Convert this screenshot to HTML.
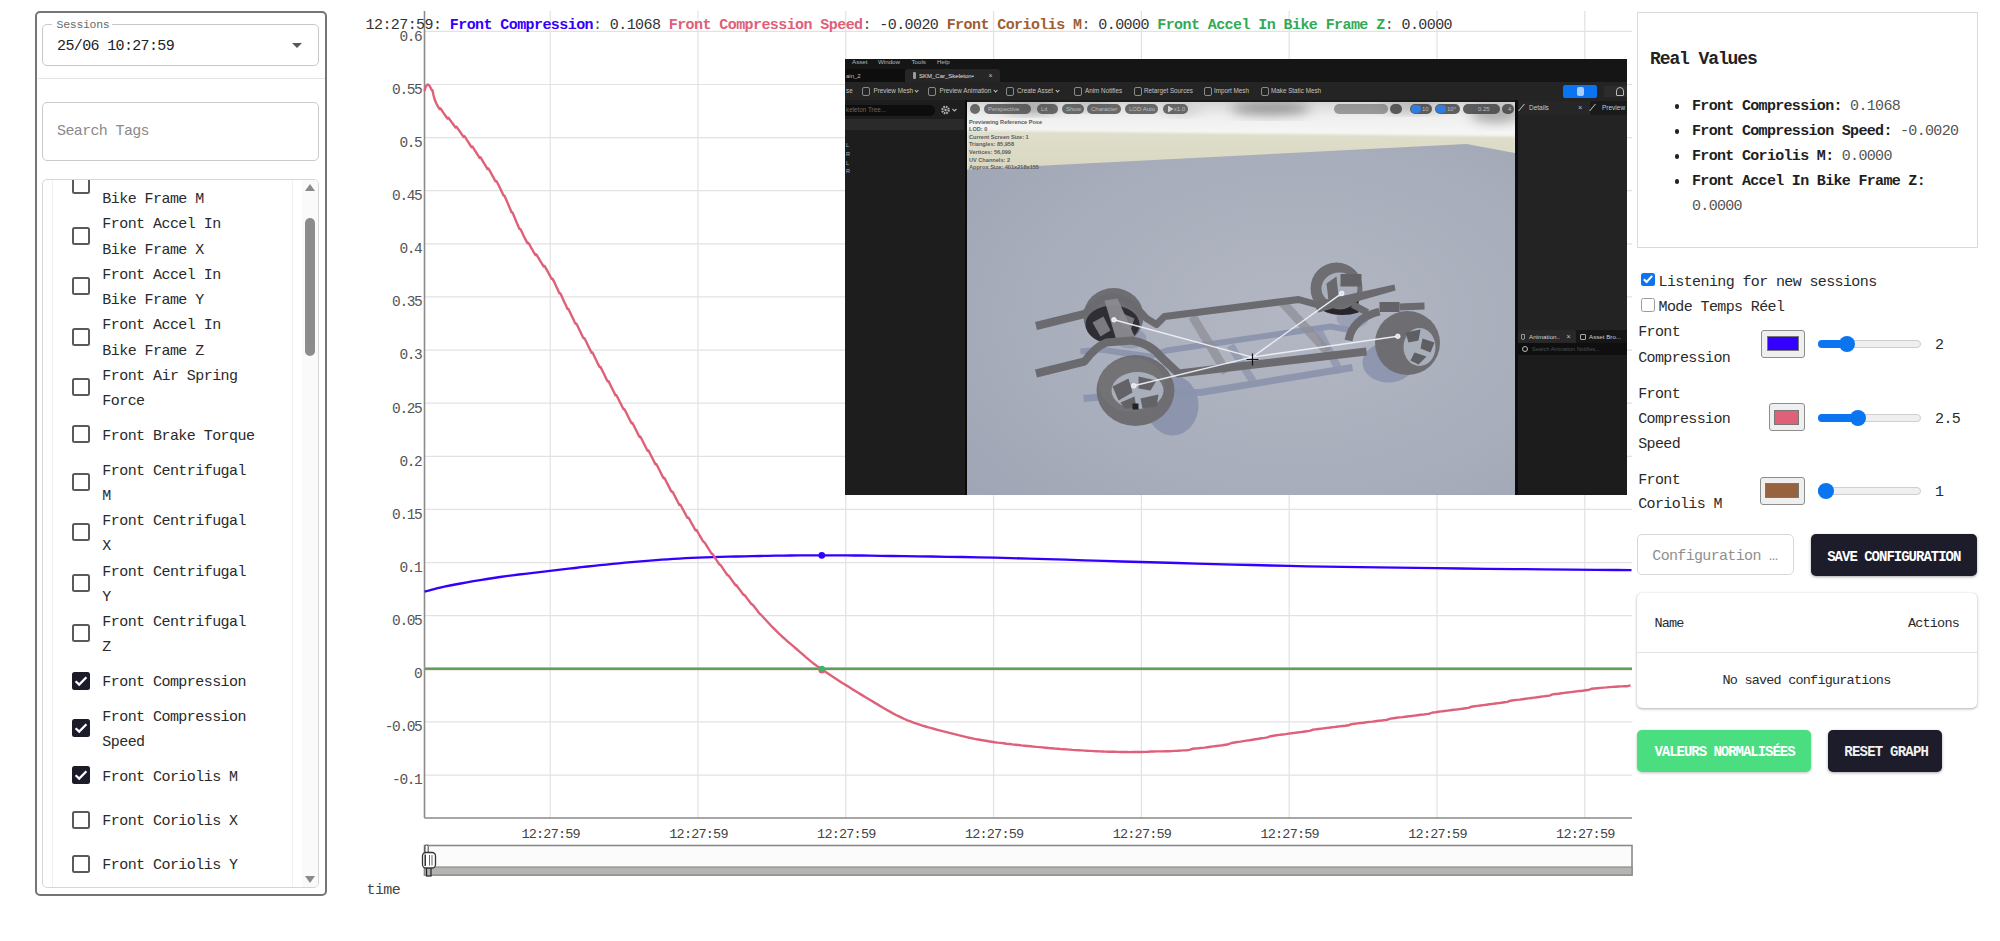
<!DOCTYPE html>
<html><head><meta charset="utf-8"><title>Telemetry</title>
<style>
html,body{margin:0;padding:0;}
body{width:2000px;height:941px;position:relative;overflow:hidden;background:#fff;font-family:"Liberation Mono",monospace;}
.a{position:absolute;box-sizing:border-box;}
.t{position:absolute;white-space:pre;font-family:"Liberation Mono",monospace;}
.ue{font-family:"Liberation Sans",sans-serif;}
</style></head><body>

<svg class="a" style="left:0;top:0" width="2000" height="941" viewBox="0 0 2000 941">
<line x1="424.5" y1="31.36" x2="1632.0" y2="31.36" stroke="#e2e2e2" stroke-width="1.2"/>
<line x1="424.5" y1="84.48" x2="1632.0" y2="84.48" stroke="#e2e2e2" stroke-width="1.2"/>
<line x1="424.5" y1="137.60" x2="1632.0" y2="137.60" stroke="#e2e2e2" stroke-width="1.2"/>
<line x1="424.5" y1="190.72" x2="1632.0" y2="190.72" stroke="#e2e2e2" stroke-width="1.2"/>
<line x1="424.5" y1="243.84" x2="1632.0" y2="243.84" stroke="#e2e2e2" stroke-width="1.2"/>
<line x1="424.5" y1="296.96" x2="1632.0" y2="296.96" stroke="#e2e2e2" stroke-width="1.2"/>
<line x1="424.5" y1="350.08" x2="1632.0" y2="350.08" stroke="#e2e2e2" stroke-width="1.2"/>
<line x1="424.5" y1="403.20" x2="1632.0" y2="403.20" stroke="#e2e2e2" stroke-width="1.2"/>
<line x1="424.5" y1="456.32" x2="1632.0" y2="456.32" stroke="#e2e2e2" stroke-width="1.2"/>
<line x1="424.5" y1="509.44" x2="1632.0" y2="509.44" stroke="#e2e2e2" stroke-width="1.2"/>
<line x1="424.5" y1="562.56" x2="1632.0" y2="562.56" stroke="#e2e2e2" stroke-width="1.2"/>
<line x1="424.5" y1="615.68" x2="1632.0" y2="615.68" stroke="#e2e2e2" stroke-width="1.2"/>
<line x1="424.5" y1="668.80" x2="1632.0" y2="668.80" stroke="#e2e2e2" stroke-width="1.2"/>
<line x1="424.5" y1="721.92" x2="1632.0" y2="721.92" stroke="#e2e2e2" stroke-width="1.2"/>
<line x1="424.5" y1="775.04" x2="1632.0" y2="775.04" stroke="#e2e2e2" stroke-width="1.2"/>
<line x1="550.20" y1="11.0" x2="550.20" y2="818.0" stroke="#e2e2e2" stroke-width="1.2"/>
<line x1="698.00" y1="11.0" x2="698.00" y2="818.0" stroke="#e2e2e2" stroke-width="1.2"/>
<line x1="845.80" y1="11.0" x2="845.80" y2="818.0" stroke="#e2e2e2" stroke-width="1.2"/>
<line x1="993.60" y1="11.0" x2="993.60" y2="818.0" stroke="#e2e2e2" stroke-width="1.2"/>
<line x1="1141.40" y1="11.0" x2="1141.40" y2="818.0" stroke="#e2e2e2" stroke-width="1.2"/>
<line x1="1289.20" y1="11.0" x2="1289.20" y2="818.0" stroke="#e2e2e2" stroke-width="1.2"/>
<line x1="1437.00" y1="11.0" x2="1437.00" y2="818.0" stroke="#e2e2e2" stroke-width="1.2"/>
<line x1="1584.80" y1="11.0" x2="1584.80" y2="818.0" stroke="#e2e2e2" stroke-width="1.2"/>
<line x1="424.5" y1="11.0" x2="424.5" y2="818.0" stroke="#8a8a8a" stroke-width="1.6"/>
<line x1="424.5" y1="818.0" x2="1632.0" y2="818.0" stroke="#8a8a8a" stroke-width="1.6"/>
<line x1="424.5" y1="668.80" x2="1632.0" y2="668.80" stroke="#cfae92" stroke-width="3.0"/>
<line x1="424.5" y1="668.80" x2="1632.0" y2="668.80" stroke="#5f9c5e" stroke-width="2.3"/>
<path d="M424.6,591.6 L426.4,591.1 L428.6,590.6 L431.2,589.9 L434.2,589.1 L437.6,588.2 L441.3,587.3 L445.5,586.4 L450.0,585.5 L455.1,584.5 L460.8,583.5 L466.9,582.4 L473.5,581.2 L480.2,580.1 L486.9,579.0 L493.6,578.0 L500.0,577.0 L506.2,576.1 L512.5,575.3 L518.8,574.5 L525.0,573.8 L531.2,573.1 L537.5,572.3 L543.8,571.6 L550.0,570.9 L556.2,570.2 L562.5,569.4 L568.8,568.7 L575.0,568.0 L581.2,567.2 L587.5,566.5 L593.8,565.9 L600.0,565.2 L606.3,564.6 L612.5,563.9 L618.8,563.3 L625.1,562.7 L631.4,562.2 L637.6,561.6 L643.8,561.1 L650.0,560.6 L656.0,560.1 L661.9,559.7 L667.6,559.3 L673.4,558.9 L679.3,558.6 L685.3,558.2 L691.6,557.9 L698.3,557.6 L705.4,557.3 L712.8,557.1 L720.5,556.9 L728.3,556.7 L736.3,556.5 L744.3,556.3 L752.2,556.1 L760.0,556.0 L767.7,555.9 L775.4,555.7 L783.1,555.6 L790.8,555.5 L798.5,555.4 L806.2,555.4 L813.8,555.3 L821.3,555.3 L828.4,555.3 L834.8,555.3 L841.0,555.3 L847.3,555.4 L854.0,555.5 L861.5,555.5 L870.0,555.7 L880.0,555.8 L891.4,556.0 L904.0,556.1 L917.5,556.3 L931.8,556.5 L946.9,556.8 L962.4,557.0 L978.4,557.3 L994.6,557.7 L1011.3,558.1 L1028.9,558.6 L1047.0,559.2 L1065.6,559.7 L1084.4,560.3 L1103.4,560.9 L1122.2,561.5 L1140.8,562.0 L1159.2,562.5 L1177.7,563.0 L1196.2,563.6 L1214.8,564.1 L1233.4,564.6 L1251.9,565.0 L1270.5,565.5 L1289.0,565.9 L1307.2,566.3 L1324.9,566.6 L1342.5,566.9 L1360.1,567.2 L1378.1,567.4 L1396.7,567.7 L1416.3,567.9 L1437.0,568.2 L1460.4,568.5 L1486.9,568.8 L1515.1,569.1 L1543.5,569.3 L1570.8,569.6 L1595.5,569.8 L1616.2,570.0 L1631.5,570.2" fill="none" stroke="#3300ff" stroke-width="2.3" stroke-linejoin="round"/>
<path d="M424.5,90.8 L425.5,87.5 L426.5,85.5 L427.5,84.5 L428.5,84.8 L429.5,85.9 L430.5,87.6 L431.5,89.8 L432.5,90.4 L433.5,95.3 L434.5,99.0 L435.5,101.6 L436.5,103.7 L437.5,105.6 L438.5,107.4 L439.5,109.0 L440.5,108.4 L441.5,110.0 L442.5,111.4 L443.5,112.9 L444.5,114.3 L445.5,115.8 L446.5,117.2 L447.5,118.6 L448.5,117.8 L449.5,119.2 L450.5,120.6 L451.5,122.0 L452.5,123.3 L453.5,124.7 L454.5,126.1 L455.5,127.5 L456.5,126.7 L457.5,128.2 L458.5,129.6 L459.5,131.0 L460.5,132.4 L461.5,133.9 L462.5,135.4 L463.5,136.9 L464.5,136.2 L465.5,137.7 L466.5,139.3 L467.5,140.8 L468.5,142.4 L469.5,144.0 L470.5,145.6 L471.5,147.2 L472.5,146.5 L473.5,148.2 L474.5,149.8 L475.5,151.4 L476.5,153.0 L477.5,154.6 L478.5,156.2 L479.5,157.9 L480.5,157.3 L481.5,159.0 L482.5,160.6 L483.5,162.3 L484.5,164.0 L485.5,165.7 L486.5,167.4 L487.5,169.1 L488.5,168.6 L489.5,170.4 L490.5,172.2 L491.5,174.0 L492.5,175.8 L493.5,177.6 L494.5,179.5 L495.5,181.4 L496.5,181.1 L497.5,183.0 L498.5,185.0 L499.5,187.0 L500.5,189.1 L501.5,191.2 L502.5,193.3 L503.5,195.6 L504.5,195.7 L505.5,198.0 L506.5,200.2 L507.5,202.6 L508.5,205.0 L509.5,207.4 L510.5,209.8 L511.5,212.2 L512.5,212.4 L513.5,214.9 L514.5,217.3 L515.5,219.7 L516.5,222.1 L517.5,224.4 L518.5,226.7 L519.5,229.1 L520.5,229.1 L521.5,231.2 L522.5,233.3 L523.5,235.5 L524.5,237.5 L525.5,239.4 L526.5,241.4 L527.5,243.3 L528.5,243.0 L529.5,244.7 L530.5,246.5 L531.5,248.3 L532.5,250.0 L533.5,251.8 L534.5,253.4 L535.5,255.1 L536.5,254.6 L537.5,256.3 L538.5,258.0 L539.5,259.6 L540.5,261.3 L541.5,263.0 L542.5,264.7 L543.5,266.4 L544.5,265.9 L545.5,267.6 L546.5,269.4 L547.5,271.2 L548.5,273.0 L549.5,274.9 L550.5,276.8 L551.5,278.8 L552.5,278.6 L553.5,280.6 L554.5,282.6 L555.5,284.8 L556.5,286.9 L557.5,289.0 L558.5,291.2 L559.5,293.4 L560.5,293.4 L561.5,295.7 L562.5,297.9 L563.5,300.2 L564.5,302.4 L565.5,304.6 L566.5,306.8 L567.5,309.0 L568.5,309.0 L569.5,311.2 L570.5,313.3 L571.5,315.4 L572.5,317.5 L573.5,319.6 L574.5,321.8 L575.5,323.8 L576.5,323.7 L577.5,325.8 L578.5,327.9 L579.5,330.0 L580.5,332.1 L581.5,334.2 L582.5,336.2 L583.5,338.3 L584.5,338.2 L585.5,340.3 L586.5,342.3 L587.5,344.4 L588.5,346.5 L589.5,348.5 L590.5,350.6 L591.5,352.7 L592.5,352.5 L593.5,354.6 L594.5,356.7 L595.5,358.7 L596.5,360.8 L597.5,362.9 L598.5,364.9 L599.5,367.0 L600.5,366.9 L601.5,368.9 L602.5,371.0 L603.5,373.0 L604.5,375.1 L605.5,377.1 L606.5,379.2 L607.5,381.2 L608.5,381.1 L609.5,383.1 L610.5,385.2 L611.5,387.2 L612.5,389.3 L613.5,391.3 L614.5,393.3 L615.5,395.4 L616.5,395.2 L617.5,397.2 L618.5,399.3 L619.5,401.3 L620.5,403.3 L621.5,405.3 L622.5,407.3 L623.5,409.3 L624.5,409.2 L625.5,411.2 L626.5,413.2 L627.5,415.2 L628.5,417.2 L629.5,419.2 L630.5,421.2 L631.5,423.2 L632.5,423.0 L633.5,425.0 L634.5,427.0 L635.5,429.0 L636.5,431.0 L637.5,433.0 L638.5,435.0 L639.5,437.0 L640.5,436.8 L641.5,438.8 L642.5,440.8 L643.5,442.8 L644.5,444.8 L645.5,446.7 L646.5,448.7 L647.5,450.7 L648.5,450.5 L649.5,452.5 L650.5,454.5 L651.5,456.5 L652.5,458.5 L653.5,460.5 L654.5,462.4 L655.5,464.4 L656.5,464.2 L657.5,466.2 L658.5,468.2 L659.5,470.2 L660.5,472.2 L661.5,474.2 L662.5,476.2 L663.5,478.2 L664.5,478.0 L665.5,480.0 L666.5,482.0 L667.5,483.9 L668.5,485.9 L669.5,487.9 L670.5,489.9 L671.5,491.8 L672.5,491.6 L673.5,493.5 L674.5,495.5 L675.5,497.4 L676.5,499.4 L677.5,501.3 L678.5,503.2 L679.5,505.1 L680.5,504.8 L681.5,506.7 L682.5,508.6 L683.5,510.5 L684.5,512.4 L685.5,514.2 L686.5,516.1 L687.5,517.9 L688.5,517.6 L689.5,519.4 L690.5,521.2 L691.5,523.1 L692.5,524.9 L693.5,526.7 L694.5,528.5 L695.5,530.3 L696.5,529.9 L697.5,531.7 L698.5,533.5 L699.5,535.2 L700.5,537.0 L701.5,538.6 L702.5,540.3 L703.5,541.9 L704.5,542.3 L705.5,543.9 L706.5,545.5 L707.5,547.1 L708.5,548.7 L709.5,550.3 L710.5,551.9 L711.5,553.5 L712.5,553.8 L713.5,555.4 L714.5,557.0 L715.5,558.5 L716.5,560.1 L717.5,561.6 L718.5,563.1 L719.5,564.6 L720.5,564.9 L721.5,566.4 L722.5,567.9 L723.5,569.4 L724.5,570.9 L725.5,572.3 L726.5,573.8 L727.5,575.2 L728.5,575.4 L729.5,576.8 L730.5,578.2 L731.5,579.6 L732.5,581.0 L733.5,582.4 L734.5,583.8 L735.5,585.2 L736.5,585.3 L737.5,586.7 L738.5,588.0 L739.5,589.4 L740.5,590.8 L741.5,592.1 L742.5,593.5 L743.5,594.8 L744.5,595.0 L745.5,596.3 L746.5,597.6 L747.5,599.0 L748.5,600.3 L749.5,601.6 L750.5,602.9 L751.5,604.3 L752.5,604.4 L753.5,605.7 L754.5,607.0 L755.5,608.3 L756.5,609.6 L757.5,610.9 L758.5,612.2 L759.5,613.5 L760.5,614.2 L763.5,617.5 L766.5,620.8 L769.5,624.0 L772.5,627.2 L775.5,630.2 L778.5,633.1 L781.5,636.0 L784.5,638.7 L787.5,641.3 L790.5,643.9 L793.5,646.4 L796.5,649.0 L799.5,651.6 L802.5,654.2 L805.5,656.9 L808.5,659.4 L811.5,661.9 L814.5,664.2 L817.5,666.4 L820.5,668.5 L823.5,670.6 L826.5,672.6 L829.5,674.6 L832.5,676.6 L835.5,678.5 L838.5,680.4 L841.5,682.4 L844.5,684.3 L847.5,686.1 L850.5,688.0 L853.5,689.9 L856.5,691.7 L859.5,693.6 L862.5,695.4 L865.5,697.2 L868.5,699.0 L871.5,700.8 L874.5,702.6 L877.5,704.4 L880.5,706.2 L883.5,708.0 L886.5,709.7 L889.5,711.4 L892.5,713.1 L895.5,714.7 L898.5,716.2 L901.5,717.6 L904.5,719.0 L907.5,720.3 L910.5,721.4 L913.5,722.6 L916.5,723.6 L919.5,724.6 L922.5,725.6 L925.5,726.5 L928.5,727.4 L931.5,728.2 L934.5,729.0 L937.5,729.8 L940.5,730.6 L943.5,731.4 L946.5,732.1 L949.5,732.9 L952.5,733.6 L955.5,734.4 L958.5,735.2 L961.5,735.9 L964.5,736.6 L967.5,737.3 L970.5,738.0 L973.5,738.6 L976.5,739.3 L979.5,739.8 L982.5,740.3 L985.5,740.8 L988.5,741.3 L991.5,741.7 L994.5,742.2 L997.5,742.6 L1000.5,742.9 L1003.5,743.3 L1006.5,743.7 L1009.5,744.0 L1012.5,744.4 L1015.5,744.7 L1018.5,745.0 L1021.5,745.4 L1024.5,745.7 L1027.5,746.0 L1030.5,746.3 L1033.5,746.6 L1036.5,746.9 L1039.5,747.1 L1042.5,747.4 L1045.5,747.7 L1048.5,748.0 L1051.5,748.2 L1054.5,748.5 L1057.5,748.7 L1060.5,749.0 L1063.5,749.2 L1066.5,749.4 L1069.5,749.6 L1072.5,749.9 L1075.5,750.1 L1078.5,750.2 L1081.5,750.4 L1084.5,750.6 L1087.5,750.8 L1090.5,750.9 L1093.5,751.1 L1096.5,751.2 L1099.5,751.4 L1102.5,751.5 L1105.5,751.6 L1108.5,751.7 L1111.5,751.8 L1114.5,751.8 L1117.5,751.9 L1120.5,752.0 L1123.5,752.0 L1126.5,752.0 L1129.5,752.1 L1132.5,752.0 L1135.5,752.0 L1138.5,752.0 L1141.5,752.0 L1144.5,751.9 L1147.5,751.9 L1150.5,751.5 L1153.5,751.5 L1156.5,751.4 L1159.5,751.4 L1162.5,751.4 L1165.5,751.3 L1168.5,751.2 L1171.5,751.1 L1174.5,750.9 L1177.5,750.8 L1180.5,750.6 L1183.5,750.4 L1186.5,750.2 L1189.5,749.9 L1192.5,748.8 L1195.5,748.5 L1198.5,748.3 L1201.5,747.9 L1204.5,747.6 L1207.5,747.2 L1210.5,746.8 L1213.5,746.4 L1216.5,746.0 L1219.5,745.6 L1222.5,745.2 L1225.5,744.7 L1228.5,744.2 L1231.5,743.0 L1234.5,742.5 L1237.5,742.0 L1240.5,741.6 L1243.5,741.1 L1246.5,740.6 L1249.5,740.2 L1252.5,739.7 L1255.5,739.2 L1258.5,738.8 L1261.5,738.3 L1264.5,737.9 L1267.5,737.4 L1270.5,736.2 L1273.5,735.7 L1276.5,735.3 L1279.5,734.9 L1282.5,734.5 L1285.5,734.1 L1288.5,733.6 L1291.5,733.3 L1294.5,732.9 L1297.5,732.5 L1300.5,732.1 L1303.5,731.7 L1306.5,731.3 L1309.5,730.9 L1312.5,729.8 L1315.5,729.4 L1318.5,729.0 L1321.5,728.6 L1324.5,728.3 L1327.5,727.9 L1330.5,727.5 L1333.5,727.1 L1336.5,726.8 L1339.5,726.4 L1342.5,726.0 L1345.5,725.7 L1348.5,725.3 L1351.5,724.1 L1354.5,723.8 L1357.5,723.4 L1360.5,723.0 L1363.5,722.7 L1366.5,722.3 L1369.5,721.9 L1372.5,721.6 L1375.5,721.2 L1378.5,720.8 L1381.5,720.5 L1384.5,720.1 L1387.5,719.7 L1390.5,718.6 L1393.5,718.2 L1396.5,717.8 L1399.5,717.4 L1402.5,717.1 L1405.5,716.7 L1408.5,716.3 L1411.5,716.0 L1414.5,715.6 L1417.5,715.2 L1420.5,714.8 L1423.5,714.5 L1426.5,714.1 L1429.5,713.7 L1432.5,712.5 L1435.5,712.2 L1438.5,711.8 L1441.5,711.4 L1444.5,711.0 L1447.5,710.6 L1450.5,710.2 L1453.5,709.8 L1456.5,709.5 L1459.5,709.1 L1462.5,708.7 L1465.5,708.3 L1468.5,707.9 L1471.5,706.7 L1474.5,706.3 L1477.5,705.9 L1480.5,705.5 L1483.5,705.1 L1486.5,704.7 L1489.5,704.3 L1492.5,703.9 L1495.5,703.5 L1498.5,703.1 L1501.5,702.7 L1504.5,702.3 L1507.5,701.9 L1510.5,700.7 L1513.5,700.3 L1516.5,699.9 L1519.5,699.6 L1522.5,699.2 L1525.5,698.8 L1528.5,698.4 L1531.5,698.0 L1534.5,697.6 L1537.5,697.2 L1540.5,696.8 L1543.5,696.4 L1546.5,696.0 L1549.5,695.6 L1552.5,694.4 L1555.5,694.0 L1558.5,693.7 L1561.5,693.3 L1564.5,692.9 L1567.5,692.5 L1570.5,692.1 L1573.5,691.8 L1576.5,691.4 L1579.5,691.0 L1582.5,690.7 L1585.5,690.3 L1588.5,690.0 L1591.5,688.8 L1594.5,688.5 L1597.5,688.2 L1600.5,687.9 L1603.5,687.6 L1606.5,687.4 L1609.5,687.1 L1612.5,686.9 L1615.5,686.7 L1618.5,686.5 L1621.5,686.4 L1624.5,686.3 L1627.5,686.2 L1630.5,685.3" fill="none" stroke="#de6079" stroke-width="2.4" stroke-linejoin="round"/>
<circle cx="821.8" cy="555.4" r="3.3" fill="#3300ff"/>
<circle cx="821.8" cy="670.3" r="3.3" fill="#de6079"/>
<circle cx="821.8" cy="668.9" r="3.2" fill="#3cb46a"/>
<rect x="424.5" y="845.5" width="1207.5" height="29.5" fill="#fbfbfb" stroke="#8a8a8a" stroke-width="1.6"/>
<rect x="424.5" y="867" width="1207.5" height="8" fill="#b4b4b2" stroke="#8a8a8a" stroke-width="1.2"/>
<rect x="425" y="845" width="3.2" height="9" rx="1.5" fill="#fff" stroke="#3a3a3a" stroke-width="1"/>
<rect x="426.5" y="866.5" width="4.5" height="9.5" fill="#b0b0b0" stroke="#222" stroke-width="1.2"/>
<rect x="422.5" y="852.5" width="13" height="15.5" rx="3.5" fill="#fff" stroke="#333" stroke-width="1.3"/>
<line x1="425.2" y1="854.5" x2="425.2" y2="866" stroke="#111" stroke-width="1.3"/>
<line x1="429.5" y1="855" x2="429.5" y2="865.5" stroke="#666" stroke-width="1"/>
<line x1="432" y1="855" x2="432" y2="865.5" stroke="#666" stroke-width="1"/>
</svg>
<div class="t" style="right:1578.70px;top:29.75px;font-size:14.5px;line-height:14.5px;letter-spacing:-1.4px;color:#555;font-weight:normal;text-align:right;">0.6</div>
<div class="t" style="right:1578.70px;top:82.87px;font-size:14.5px;line-height:14.5px;letter-spacing:-1.4px;color:#555;font-weight:normal;text-align:right;">0.55</div>
<div class="t" style="right:1578.70px;top:135.99px;font-size:14.5px;line-height:14.5px;letter-spacing:-1.4px;color:#555;font-weight:normal;text-align:right;">0.5</div>
<div class="t" style="right:1578.70px;top:189.11px;font-size:14.5px;line-height:14.5px;letter-spacing:-1.4px;color:#555;font-weight:normal;text-align:right;">0.45</div>
<div class="t" style="right:1578.70px;top:242.23px;font-size:14.5px;line-height:14.5px;letter-spacing:-1.4px;color:#555;font-weight:normal;text-align:right;">0.4</div>
<div class="t" style="right:1578.70px;top:295.35px;font-size:14.5px;line-height:14.5px;letter-spacing:-1.4px;color:#555;font-weight:normal;text-align:right;">0.35</div>
<div class="t" style="right:1578.70px;top:348.47px;font-size:14.5px;line-height:14.5px;letter-spacing:-1.4px;color:#555;font-weight:normal;text-align:right;">0.3</div>
<div class="t" style="right:1578.70px;top:401.59px;font-size:14.5px;line-height:14.5px;letter-spacing:-1.4px;color:#555;font-weight:normal;text-align:right;">0.25</div>
<div class="t" style="right:1578.70px;top:454.71px;font-size:14.5px;line-height:14.5px;letter-spacing:-1.4px;color:#555;font-weight:normal;text-align:right;">0.2</div>
<div class="t" style="right:1578.70px;top:507.83px;font-size:14.5px;line-height:14.5px;letter-spacing:-1.4px;color:#555;font-weight:normal;text-align:right;">0.15</div>
<div class="t" style="right:1578.70px;top:560.95px;font-size:14.5px;line-height:14.5px;letter-spacing:-1.4px;color:#555;font-weight:normal;text-align:right;">0.1</div>
<div class="t" style="right:1578.70px;top:614.07px;font-size:14.5px;line-height:14.5px;letter-spacing:-1.4px;color:#555;font-weight:normal;text-align:right;">0.05</div>
<div class="t" style="right:1578.70px;top:667.19px;font-size:14.5px;line-height:14.5px;letter-spacing:-1.4px;color:#555;font-weight:normal;text-align:right;">0</div>
<div class="t" style="right:1578.70px;top:720.31px;font-size:14.5px;line-height:14.5px;letter-spacing:-1.4px;color:#555;font-weight:normal;text-align:right;">-0.05</div>
<div class="t" style="right:1578.70px;top:773.43px;font-size:14.5px;line-height:14.5px;letter-spacing:-1.4px;color:#555;font-weight:normal;text-align:right;">-0.1</div>
<div class="t" style="left:350.70px;width:400px;top:827.86px;font-size:13.5px;line-height:13.5px;letter-spacing:-0.8px;color:#444;font-weight:normal;text-align:center;">12:27:59</div>
<div class="t" style="left:498.50px;width:400px;top:827.86px;font-size:13.5px;line-height:13.5px;letter-spacing:-0.8px;color:#444;font-weight:normal;text-align:center;">12:27:59</div>
<div class="t" style="left:646.30px;width:400px;top:827.86px;font-size:13.5px;line-height:13.5px;letter-spacing:-0.8px;color:#444;font-weight:normal;text-align:center;">12:27:59</div>
<div class="t" style="left:794.10px;width:400px;top:827.86px;font-size:13.5px;line-height:13.5px;letter-spacing:-0.8px;color:#444;font-weight:normal;text-align:center;">12:27:59</div>
<div class="t" style="left:941.90px;width:400px;top:827.86px;font-size:13.5px;line-height:13.5px;letter-spacing:-0.8px;color:#444;font-weight:normal;text-align:center;">12:27:59</div>
<div class="t" style="left:1089.70px;width:400px;top:827.86px;font-size:13.5px;line-height:13.5px;letter-spacing:-0.8px;color:#444;font-weight:normal;text-align:center;">12:27:59</div>
<div class="t" style="left:1237.50px;width:400px;top:827.86px;font-size:13.5px;line-height:13.5px;letter-spacing:-0.8px;color:#444;font-weight:normal;text-align:center;">12:27:59</div>
<div class="t" style="left:1385.30px;width:400px;top:827.86px;font-size:13.5px;line-height:13.5px;letter-spacing:-0.8px;color:#444;font-weight:normal;text-align:center;">12:27:59</div>
<div class="t" style="left:366.50px;top:882.51px;font-size:15px;line-height:15px;letter-spacing:-0.6px;color:#444;font-weight:normal;">time</div>
<div class="t" style="left:365.60px;top:18.11px;font-size:15px;line-height:15px;letter-spacing:-0.58px;color:#222;font-weight:normal;"><span style="color:#333">12:27:59: </span><b style="color:#3300ff">Front Compression</b><span style="color:#555">: </span><span style="color:#333">0.1068 </span><b style="color:#de6079">Front Compression Speed</b><span style="color:#555">: </span><span style="color:#333">-0.0020 </span><b style="color:#9e5e33">Front Coriolis M</b><span style="color:#555">: </span><span style="color:#333">0.0000 </span><b style="color:#33aa55">Front Accel In Bike Frame Z</b><span style="color:#555">: </span><span style="color:#333">0.0000</span></div>
<div class="a" style="left:34.80px;top:10.80px;width:292.00px;height:885.20px;border:2px solid #757575;border-radius:5px;background:#fff;"></div>
<div class="a" style="left:41.7px;top:24.4px;width:277.3px;height:41.6px;border:1px solid #c8c8c8;border-radius:5px;"></div>
<div class="a" style="left:52.00px;top:20.00px;width:60.00px;height:8.00px;background:#fff;"></div>
<div class="t" style="left:56.60px;top:18.99px;font-size:11.5px;line-height:11.5px;letter-spacing:-0.3px;color:#6b6b6b;font-weight:normal;">Sessions</div>
<div class="t" style="left:57.10px;top:39.01px;font-size:15px;line-height:15px;letter-spacing:-0.65px;color:#222;font-weight:normal;">25/06 10:27:59</div>
<div class="a" style="left:292px;top:43px;width:0;height:0;border-left:5.2px solid transparent;border-right:5.2px solid transparent;border-top:5.2px solid #585858;"></div>
<div class="a" style="left:37.50px;top:77.50px;width:287.00px;height:1.30px;background:#e4e4e4;"></div>
<div class="a" style="left:41.7px;top:102px;width:277.3px;height:59px;border:1px solid #cacaca;border-radius:5px;"></div>
<div class="t" style="left:57.10px;top:124.01px;font-size:15px;line-height:15px;letter-spacing:-0.65px;color:#8a8a8a;font-weight:normal;">Search Tags</div>
<div class="a" style="left:41.7px;top:178.5px;width:277px;height:709.0px;border:1px solid #d6d6d6;border-radius:5px;overflow:hidden;">
<div class="a" style="left:9.5px;top:0;width:1px;height:100%;background:#f0f0f0;"></div>
<div class="a" style="left:249.5px;top:0;width:1px;height:100%;background:#f0f0f0;"></div>
<div class="a" style="left:259px;top:0;width:17px;height:100%;background:#fafafa;"></div>
<div class="a" style="left:29.30px;top:-3.40px;width:18px;height:18px;border:2px solid #5a5a5a;border-radius:2.5px;"></div>
<div class="t" style="left:59.60px;top:-12.52px;font-size:15px;line-height:15px;letter-spacing:-0.55px;color:#2a2a2a;">Front Accel In</div>
<div class="t" style="left:59.60px;top:12.73px;font-size:15px;line-height:15px;letter-spacing:-0.55px;color:#2a2a2a;">Bike Frame M</div>
<div class="a" style="left:29.30px;top:47.10px;width:18px;height:18px;border:2px solid #5a5a5a;border-radius:2.5px;"></div>
<div class="t" style="left:59.60px;top:37.98px;font-size:15px;line-height:15px;letter-spacing:-0.55px;color:#2a2a2a;">Front Accel In</div>
<div class="t" style="left:59.60px;top:63.23px;font-size:15px;line-height:15px;letter-spacing:-0.55px;color:#2a2a2a;">Bike Frame X</div>
<div class="a" style="left:29.30px;top:97.60px;width:18px;height:18px;border:2px solid #5a5a5a;border-radius:2.5px;"></div>
<div class="t" style="left:59.60px;top:88.49px;font-size:15px;line-height:15px;letter-spacing:-0.55px;color:#2a2a2a;">Front Accel In</div>
<div class="t" style="left:59.60px;top:113.74px;font-size:15px;line-height:15px;letter-spacing:-0.55px;color:#2a2a2a;">Bike Frame Y</div>
<div class="a" style="left:29.30px;top:148.10px;width:18px;height:18px;border:2px solid #5a5a5a;border-radius:2.5px;"></div>
<div class="t" style="left:59.60px;top:138.99px;font-size:15px;line-height:15px;letter-spacing:-0.55px;color:#2a2a2a;">Front Accel In</div>
<div class="t" style="left:59.60px;top:164.24px;font-size:15px;line-height:15px;letter-spacing:-0.55px;color:#2a2a2a;">Bike Frame Z</div>
<div class="a" style="left:29.30px;top:198.60px;width:18px;height:18px;border:2px solid #5a5a5a;border-radius:2.5px;"></div>
<div class="t" style="left:59.60px;top:189.49px;font-size:15px;line-height:15px;letter-spacing:-0.55px;color:#2a2a2a;">Front Air Spring</div>
<div class="t" style="left:59.60px;top:214.74px;font-size:15px;line-height:15px;letter-spacing:-0.55px;color:#2a2a2a;">Force</div>
<div class="a" style="left:29.30px;top:245.98px;width:18px;height:18px;border:2px solid #5a5a5a;border-radius:2.5px;"></div>
<div class="t" style="left:59.60px;top:249.49px;font-size:15px;line-height:15px;letter-spacing:-0.55px;color:#2a2a2a;">Front Brake Torque</div>
<div class="a" style="left:29.30px;top:293.35px;width:18px;height:18px;border:2px solid #5a5a5a;border-radius:2.5px;"></div>
<div class="t" style="left:59.60px;top:284.24px;font-size:15px;line-height:15px;letter-spacing:-0.55px;color:#2a2a2a;">Front Centrifugal</div>
<div class="t" style="left:59.60px;top:309.49px;font-size:15px;line-height:15px;letter-spacing:-0.55px;color:#2a2a2a;">M</div>
<div class="a" style="left:29.30px;top:343.85px;width:18px;height:18px;border:2px solid #5a5a5a;border-radius:2.5px;"></div>
<div class="t" style="left:59.60px;top:334.74px;font-size:15px;line-height:15px;letter-spacing:-0.55px;color:#2a2a2a;">Front Centrifugal</div>
<div class="t" style="left:59.60px;top:359.99px;font-size:15px;line-height:15px;letter-spacing:-0.55px;color:#2a2a2a;">X</div>
<div class="a" style="left:29.30px;top:394.35px;width:18px;height:18px;border:2px solid #5a5a5a;border-radius:2.5px;"></div>
<div class="t" style="left:59.60px;top:385.24px;font-size:15px;line-height:15px;letter-spacing:-0.55px;color:#2a2a2a;">Front Centrifugal</div>
<div class="t" style="left:59.60px;top:410.49px;font-size:15px;line-height:15px;letter-spacing:-0.55px;color:#2a2a2a;">Y</div>
<div class="a" style="left:29.30px;top:444.85px;width:18px;height:18px;border:2px solid #5a5a5a;border-radius:2.5px;"></div>
<div class="t" style="left:59.60px;top:435.74px;font-size:15px;line-height:15px;letter-spacing:-0.55px;color:#2a2a2a;">Front Centrifugal</div>
<div class="t" style="left:59.60px;top:460.99px;font-size:15px;line-height:15px;letter-spacing:-0.55px;color:#2a2a2a;">Z</div>
<div class="a" style="left:29.30px;top:492.23px;width:18px;height:18px;background:#1b1b29;border-radius:2.5px;"></div>
<svg class="a" style="left:29.30px;top:492.23px" width="18" height="18" viewBox="0 0 18 18"><path d="M3.6,9.2 L7.2,12.6 L14.4,5.2" fill="none" stroke="#fff" stroke-width="2.2"/></svg>
<div class="t" style="left:59.60px;top:495.74px;font-size:15px;line-height:15px;letter-spacing:-0.55px;color:#2a2a2a;">Front Compression</div>
<div class="a" style="left:29.30px;top:539.60px;width:18px;height:18px;background:#1b1b29;border-radius:2.5px;"></div>
<svg class="a" style="left:29.30px;top:539.60px" width="18" height="18" viewBox="0 0 18 18"><path d="M3.6,9.2 L7.2,12.6 L14.4,5.2" fill="none" stroke="#fff" stroke-width="2.2"/></svg>
<div class="t" style="left:59.60px;top:530.49px;font-size:15px;line-height:15px;letter-spacing:-0.55px;color:#2a2a2a;">Front Compression</div>
<div class="t" style="left:59.60px;top:555.74px;font-size:15px;line-height:15px;letter-spacing:-0.55px;color:#2a2a2a;">Speed</div>
<div class="a" style="left:29.30px;top:586.98px;width:18px;height:18px;background:#1b1b29;border-radius:2.5px;"></div>
<svg class="a" style="left:29.30px;top:586.98px" width="18" height="18" viewBox="0 0 18 18"><path d="M3.6,9.2 L7.2,12.6 L14.4,5.2" fill="none" stroke="#fff" stroke-width="2.2"/></svg>
<div class="t" style="left:59.60px;top:590.49px;font-size:15px;line-height:15px;letter-spacing:-0.55px;color:#2a2a2a;">Front Coriolis M</div>
<div class="a" style="left:29.30px;top:631.23px;width:18px;height:18px;border:2px solid #5a5a5a;border-radius:2.5px;"></div>
<div class="t" style="left:59.60px;top:634.74px;font-size:15px;line-height:15px;letter-spacing:-0.55px;color:#2a2a2a;">Front Coriolis X</div>
<div class="a" style="left:29.30px;top:675.48px;width:18px;height:18px;border:2px solid #5a5a5a;border-radius:2.5px;"></div>
<div class="t" style="left:59.60px;top:678.99px;font-size:15px;line-height:15px;letter-spacing:-0.55px;color:#2a2a2a;">Front Coriolis Y</div>
<div class="a" style="left:29.30px;top:719.73px;width:18px;height:18px;border:2px solid #5a5a5a;border-radius:2.5px;"></div>
<div class="t" style="left:59.60px;top:723.24px;font-size:15px;line-height:15px;letter-spacing:-0.55px;color:#2a2a2a;">Front Coriolis Z</div>
<div class="a" style="left:262.30px;top:38.10px;width:9.7px;height:138.2px;background:#8c8c8c;border-radius:5px;"></div>
<div class="a" style="left:262.50px;top:4.50px;width:0;height:0;border-left:5px solid transparent;border-right:5px solid transparent;border-bottom:7.2px solid #8a8a8a;"></div>
<div class="a" style="left:262.30px;top:696.00px;width:0;height:0;border-left:5px solid transparent;border-right:5px solid transparent;border-top:7.2px solid #8a8a8a;"></div>
</div>
<div class="a" style="left:1637.00px;top:11.50px;width:340.50px;height:236.00px;border:1.5px solid #dadada;"></div>
<div class="t" style="left:1650.00px;top:50.01px;font-size:18px;line-height:18px;letter-spacing:-1.1px;color:#222;font-weight:bold;">Real Values</div>
<div class="a" style="left:1674.8px;top:104.30px;width:4.6px;height:4.6px;border-radius:50%;background:#222;"></div>
<div class="t" style="left:1692.00px;top:99.01px;font-size:15px;line-height:15px;letter-spacing:-0.68px;color:#222;font-weight:normal;"><b style="color:#1e1e1e">Front Compression:</b><span style="color:#555"> 0.1068</span></div>
<div class="a" style="left:1674.8px;top:129.25px;width:4.6px;height:4.6px;border-radius:50%;background:#222;"></div>
<div class="t" style="left:1692.00px;top:123.96px;font-size:15px;line-height:15px;letter-spacing:-0.68px;color:#222;font-weight:normal;"><b style="color:#1e1e1e">Front Compression Speed:</b><span style="color:#555"> -0.0020</span></div>
<div class="a" style="left:1674.8px;top:154.20px;width:4.6px;height:4.6px;border-radius:50%;background:#222;"></div>
<div class="t" style="left:1692.00px;top:148.91px;font-size:15px;line-height:15px;letter-spacing:-0.68px;color:#222;font-weight:normal;"><b style="color:#1e1e1e">Front Coriolis M:</b><span style="color:#555"> 0.0000</span></div>
<div class="a" style="left:1674.8px;top:179.15px;width:4.6px;height:4.6px;border-radius:50%;background:#222;"></div>
<div class="t" style="left:1692.00px;top:173.86px;font-size:15px;line-height:15px;letter-spacing:-0.68px;color:#222;font-weight:normal;"><b style="color:#1e1e1e">Front Accel In Bike Frame Z:</b><span style="color:#555"></span></div>
<div class="t" style="left:1692.00px;top:198.81px;font-size:15px;line-height:15px;letter-spacing:-0.68px;color:#555;font-weight:normal;">0.0000</div>
<div class="a" style="left:1641px;top:272.5px;width:13.8px;height:13.6px;background:#0b74f0;border-radius:2.5px;"></div>
<svg class="a" style="left:1641px;top:272.3px" width="14" height="14" viewBox="0 0 14 14"><path d="M2.8,7.2 L5.6,10 L11.2,3.8" fill="none" stroke="#fff" stroke-width="2"/></svg>
<div class="t" style="left:1658.60px;top:274.51px;font-size:15px;line-height:15px;letter-spacing:-0.62px;color:#2a2a2a;font-weight:normal;">Listening for new sessions</div>
<div class="a" style="left:1641px;top:298px;width:13.8px;height:13.8px;border:1.7px solid #9c9c9c;border-radius:2.5px;background:#fff;"></div>
<div class="t" style="left:1658.60px;top:299.91px;font-size:15px;line-height:15px;letter-spacing:-0.62px;color:#2a2a2a;font-weight:normal;">Mode Temps Réel</div>
<div class="t" style="left:1638.20px;top:325.31px;font-size:15px;line-height:15px;letter-spacing:-0.64px;color:#2a2a2a;font-weight:normal;">Front</div>
<div class="t" style="left:1638.20px;top:350.91px;font-size:15px;line-height:15px;letter-spacing:-0.64px;color:#2a2a2a;font-weight:normal;">Compression</div>
<div class="a" style="left:1761.00px;top:329.60px;width:43.60px;height:28.00px;border:1.3px solid #8d8d8d;border-radius:3px;background:#efefef;"></div>
<div class="a" style="left:1767.00px;top:336.00px;width:32.00px;height:15.00px;background:#3300ff;border:1px solid #777;"></div>
<div class="a" style="left:1818.00px;top:339.70px;width:103.00px;height:8.60px;background:#efefef;border:1px solid #cfcfcf;border-radius:5px;"></div>
<div class="a" style="left:1818.00px;top:339.70px;width:29.30px;height:8.60px;background:#0b74f1;border-radius:5px 0 0 5px;"></div>
<div class="a" style="left:1839.30px;top:336.00px;width:16.00px;height:16.00px;background:#0b74f1;border-radius:50%;"></div>
<div class="t" style="left:1935.00px;top:338.11px;font-size:15px;line-height:15px;letter-spacing:-0.62px;color:#2a2a2a;font-weight:normal;">2</div>
<div class="t" style="left:1638.20px;top:386.71px;font-size:15px;line-height:15px;letter-spacing:-0.64px;color:#2a2a2a;font-weight:normal;">Front</div>
<div class="t" style="left:1638.20px;top:411.91px;font-size:15px;line-height:15px;letter-spacing:-0.64px;color:#2a2a2a;font-weight:normal;">Compression</div>
<div class="t" style="left:1638.20px;top:437.31px;font-size:15px;line-height:15px;letter-spacing:-0.64px;color:#2a2a2a;font-weight:normal;">Speed</div>
<div class="a" style="left:1768.70px;top:403.30px;width:35.90px;height:28.10px;border:1.3px solid #8d8d8d;border-radius:3px;background:#efefef;"></div>
<div class="a" style="left:1774.40px;top:409.70px;width:24.50px;height:14.90px;background:#de6079;border:1px solid #777;"></div>
<div class="a" style="left:1818.00px;top:413.50px;width:103.00px;height:8.60px;background:#efefef;border:1px solid #cfcfcf;border-radius:5px;"></div>
<div class="a" style="left:1818.00px;top:413.50px;width:40.00px;height:8.60px;background:#0b74f1;border-radius:5px 0 0 5px;"></div>
<div class="a" style="left:1850.00px;top:409.80px;width:16.00px;height:16.00px;background:#0b74f1;border-radius:50%;"></div>
<div class="t" style="left:1935.00px;top:411.71px;font-size:15px;line-height:15px;letter-spacing:-0.62px;color:#2a2a2a;font-weight:normal;">2.5</div>
<div class="t" style="left:1638.20px;top:472.51px;font-size:15px;line-height:15px;letter-spacing:-0.64px;color:#2a2a2a;font-weight:normal;">Front</div>
<div class="t" style="left:1638.20px;top:497.31px;font-size:15px;line-height:15px;letter-spacing:-0.64px;color:#2a2a2a;font-weight:normal;">Coriolis M</div>
<div class="a" style="left:1759.60px;top:477.30px;width:45.00px;height:27.70px;border:1.3px solid #8d8d8d;border-radius:3px;background:#efefef;"></div>
<div class="a" style="left:1764.90px;top:483.20px;width:34.00px;height:14.90px;background:#97633e;border:1px solid #777;"></div>
<div class="a" style="left:1818.00px;top:486.70px;width:103.00px;height:8.60px;background:#efefef;border:1px solid #cfcfcf;border-radius:5px;"></div>
<div class="a" style="left:1818.00px;top:486.70px;width:7.50px;height:8.60px;background:#0b74f1;border-radius:5px 0 0 5px;"></div>
<div class="a" style="left:1817.50px;top:483.00px;width:16.00px;height:16.00px;background:#0b74f1;border-radius:50%;"></div>
<div class="t" style="left:1935.00px;top:485.41px;font-size:15px;line-height:15px;letter-spacing:-0.62px;color:#2a2a2a;font-weight:normal;">1</div>
<div class="a" style="left:1637.40px;top:533.80px;width:156.30px;height:41.50px;border:1.6px solid #d8d8d8;border-radius:5px;"></div>
<div class="t" style="left:1652.30px;top:548.51px;font-size:15px;line-height:15px;letter-spacing:-0.66px;color:#8f8f8f;font-weight:normal;">Configuration …</div>
<div class="a" style="left:1811.00px;top:533.80px;width:166.00px;height:41.90px;background:#1c1c2a;border-radius:5px;box-shadow:0 1px 3px rgba(0,0,0,0.35);"></div>
<div class="t" style="left:1827.20px;top:549.68px;font-size:14px;line-height:14px;letter-spacing:-1.0px;color:#fff;font-weight:bold;">SAVE CONFIGURATION</div>
<div class="a" style="left:1636.80px;top:593.30px;width:340.70px;height:114.80px;border-radius:5px;box-shadow:0 1px 3px rgba(0,0,0,0.3), 0 0 1px rgba(0,0,0,0.15);background:#fff;"></div>
<div class="t" style="left:1654.40px;top:616.96px;font-size:13.5px;line-height:13.5px;letter-spacing:-0.8px;color:#2a2a2a;font-weight:normal;">Name</div>
<div class="t" style="right:41.00px;top:616.96px;font-size:13.5px;line-height:13.5px;letter-spacing:-0.8px;color:#2a2a2a;font-weight:normal;text-align:right;">Actions</div>
<div class="a" style="left:1636.80px;top:651.70px;width:340.70px;height:1.20px;background:#e2e2e2;"></div>
<div class="t" style="left:1722.50px;top:674.36px;font-size:13.5px;line-height:13.5px;letter-spacing:-0.8px;color:#2a2a2a;font-weight:normal;">No saved configurations</div>
<div class="a" style="left:1637.30px;top:729.50px;width:173.30px;height:42.20px;background:#4ade80;border-radius:5px;box-shadow:0 1px 3px rgba(0,0,0,0.25);"></div>
<div class="t" style="left:1654.50px;top:744.88px;font-size:14px;line-height:14px;letter-spacing:-1.03px;color:#fff;font-weight:bold;">VALEURS NORMALISÉES</div>
<div class="a" style="left:1827.80px;top:729.50px;width:114.30px;height:42.20px;background:#1c1c2a;border-radius:5px;box-shadow:0 1px 3px rgba(0,0,0,0.35);"></div>
<div class="t" style="left:1844.30px;top:744.88px;font-size:14px;line-height:14px;letter-spacing:-0.78px;color:#f0f0f0;font-weight:bold;">RESET GRAPH</div>
<div class="a ue" style="left:845px;top:59px;width:782px;height:436px;background:#1c1c1c;overflow:hidden;">
<div class="a" style="left:0.00px;top:0.00px;width:782.00px;height:10.00px;background:#151515;"></div>
<div class="t ue" style="left:7.00px;top:-0.11px;font-size:6.2px;line-height:6.2px;color:#b8b8b8;font-family:'Liberation Sans',sans-serif;">Asset</div>
<div class="t ue" style="left:33.00px;top:-0.11px;font-size:6.2px;line-height:6.2px;color:#b8b8b8;font-family:'Liberation Sans',sans-serif;">Window</div>
<div class="t ue" style="left:66.50px;top:-0.11px;font-size:6.2px;line-height:6.2px;color:#b8b8b8;font-family:'Liberation Sans',sans-serif;">Tools</div>
<div class="t ue" style="left:92.00px;top:-0.11px;font-size:6.2px;line-height:6.2px;color:#b8b8b8;font-family:'Liberation Sans',sans-serif;">Help</div>
<div class="a" style="left:0.00px;top:10.00px;width:782.00px;height:13.00px;background:#151515;"></div>
<div class="a" style="left:0.00px;top:10.00px;width:59.50px;height:13.00px;background:#0e0e0e;"></div>
<div class="a" style="left:59.50px;top:10.00px;width:95.50px;height:13.00px;background:#262626;border-radius:3px 3px 0 0;"></div>
<div class="t ue" style="left:1.00px;top:13.57px;font-size:6px;line-height:6px;color:#c0c0c0;font-family:'Liberation Sans',sans-serif;">ain_2</div>
<div class="a" style="left:68.00px;top:13.00px;width:3.00px;height:7.00px;background:#9a9a9a;border-radius:1px;"></div>
<div class="t ue" style="left:74.00px;top:13.57px;font-size:6px;line-height:6px;color:#e0e0e0;font-family:'Liberation Sans',sans-serif;">SKM_Car_Skeleton•</div>
<div class="t ue" style="left:143.50px;top:12.66px;font-size:7px;line-height:7px;color:#c0c0c0;font-family:'Liberation Sans',sans-serif;">×</div>
<div class="a" style="left:0.00px;top:23.00px;width:782.00px;height:18.00px;background:#242424;"></div>
<div class="t ue" style="left:1.00px;top:29.30px;font-size:6.3px;line-height:6.3px;color:#c4c4c4;font-family:'Liberation Sans',sans-serif;">se</div>
<div class="t ue" style="left:28.50px;top:29.30px;font-size:6.3px;line-height:6.3px;color:#c4c4c4;font-family:'Liberation Sans',sans-serif;">Preview Mesh</div>
<div class="t ue" style="left:94.50px;top:29.30px;font-size:6.3px;line-height:6.3px;color:#c4c4c4;font-family:'Liberation Sans',sans-serif;">Preview Animation</div>
<div class="t ue" style="left:172.00px;top:29.30px;font-size:6.3px;line-height:6.3px;color:#c4c4c4;font-family:'Liberation Sans',sans-serif;">Create Asset</div>
<div class="t ue" style="left:240.00px;top:29.30px;font-size:6.3px;line-height:6.3px;color:#c4c4c4;font-family:'Liberation Sans',sans-serif;">Anim Notifies</div>
<div class="t ue" style="left:299.00px;top:29.30px;font-size:6.3px;line-height:6.3px;color:#c4c4c4;font-family:'Liberation Sans',sans-serif;">Retarget Sources</div>
<div class="t ue" style="left:369.00px;top:29.30px;font-size:6.3px;line-height:6.3px;color:#c4c4c4;font-family:'Liberation Sans',sans-serif;">Import Mesh</div>
<div class="t ue" style="left:426.00px;top:29.30px;font-size:6.3px;line-height:6.3px;color:#c4c4c4;font-family:'Liberation Sans',sans-serif;">Make Static Mesh</div>
<div class="a" style="left:69.50px;top:30.00px;width:3.20px;height:3.20px;border-right:1.1px solid #c4c4c4;border-bottom:1.1px solid #c4c4c4;transform:rotate(45deg);"></div>
<div class="a" style="left:148.50px;top:30.00px;width:3.20px;height:3.20px;border-right:1.1px solid #c4c4c4;border-bottom:1.1px solid #c4c4c4;transform:rotate(45deg);"></div>
<div class="a" style="left:210.50px;top:30.00px;width:3.20px;height:3.20px;border-right:1.1px solid #c4c4c4;border-bottom:1.1px solid #c4c4c4;transform:rotate(45deg);"></div>
<div class="a" style="left:17.00px;top:27.50px;width:8.00px;height:9.00px;border:1px solid #8a8a8a;border-radius:2px;"></div>
<div class="a" style="left:83.00px;top:27.50px;width:8.00px;height:9.00px;border:1px solid #8a8a8a;border-radius:2px;"></div>
<div class="a" style="left:161.00px;top:27.50px;width:8.00px;height:9.00px;border:1px solid #8a8a8a;border-radius:2px;"></div>
<div class="a" style="left:229.00px;top:27.50px;width:8.00px;height:9.00px;border:1px solid #8a8a8a;border-radius:2px;"></div>
<div class="a" style="left:289.00px;top:27.50px;width:8.00px;height:9.00px;border:1px solid #8a8a8a;border-radius:2px;"></div>
<div class="a" style="left:359.00px;top:27.50px;width:8.00px;height:9.00px;border:1px solid #8a8a8a;border-radius:2px;"></div>
<div class="a" style="left:416.00px;top:27.50px;width:8.00px;height:9.00px;border:1px solid #8a8a8a;border-radius:2px;"></div>
<div class="a" style="left:718.40px;top:26.30px;width:34.00px;height:12.30px;background:#0a74f0;border-radius:2px;"></div>
<div class="a" style="left:732.00px;top:28.00px;width:7.00px;height:9.00px;background:#cfe3ff;border-radius:2px;opacity:0.8;"></div>
<div class="a" style="left:759.00px;top:27.00px;width:23.00px;height:11.00px;background:#2c2c2c;"></div>
<div class="a" style="left:771.00px;top:28.00px;width:8.00px;height:9.00px;border:1px solid #bbb;border-radius:4px 4px 1px 1px;"></div>
<div class="a" style="left:0.00px;top:41.00px;width:121.00px;height:395.00px;background:#1d1d1d;"></div>
<div class="a" style="left:0.00px;top:45.50px;width:90.00px;height:11.30px;background:#0d0d0d;border-radius:0 6px 6px 0;"></div>
<div class="t ue" style="left:1.00px;top:48.30px;font-size:6.3px;line-height:6.3px;color:#6a6a6a;font-family:'Liberation Sans',sans-serif;">keleton Tree...</div>
<svg class="a" style="left:95px;top:45px" width="20" height="12" viewBox="0 0 20 12"><circle cx="5.5" cy="6" r="3.2" fill="none" stroke="#b0b0b0" stroke-width="2.2" stroke-dasharray="1.6 0.9"/><circle cx="5.5" cy="6" r="1.2" fill="#b0b0b0"/><path d="M12.5,5 L14.5,7 L16.5,5" fill="none" stroke="#b0b0b0" stroke-width="1.1"/></svg>
<div class="a" style="left:0.00px;top:60.00px;width:119.00px;height:11.00px;background:#2a2a2a;"></div>
<div class="t ue" style="left:1.00px;top:84.02px;font-size:5.5px;line-height:5.5px;color:#b0b0b0;font-family:'Liberation Sans',sans-serif;">L</div>
<div class="t ue" style="left:1.00px;top:92.52px;font-size:5.5px;line-height:5.5px;color:#b0b0b0;font-family:'Liberation Sans',sans-serif;">R</div>
<div class="t ue" style="left:1.00px;top:101.52px;font-size:5.5px;line-height:5.5px;color:#b0b0b0;font-family:'Liberation Sans',sans-serif;">L</div>
<div class="t ue" style="left:1.00px;top:110.02px;font-size:5.5px;line-height:5.5px;color:#b0b0b0;font-family:'Liberation Sans',sans-serif;">R</div>
<div class="a" style="left:119.50px;top:41.00px;width:2.00px;height:395.00px;background:#0b0b0b;"></div>
<div class="a" style="left:121.5px;top:42.5px;width:548.5px;height:393.5px;overflow:hidden;background:#a4aab8;">
<svg class="a" style="left:0;top:0" width="548.5" height="393.5" viewBox="966.5 101.5 548.5 393.5">
<defs><linearGradient id="sky" x1="0" y1="0" x2="0" y2="1"><stop offset="0" stop-color="#d6d6d6"/><stop offset="0.19" stop-color="#efefef"/><stop offset="0.36" stop-color="#f5f5f3"/><stop offset="1" stop-color="#efeee8"/></linearGradient><linearGradient id="beige" x1="0" y1="0" x2="0" y2="1"><stop offset="0" stop-color="#e0dfcc"/><stop offset="1" stop-color="#d3d1b8"/></linearGradient><radialGradient id="plane" cx="0.6" cy="0.5" r="0.75"><stop offset="0" stop-color="#b3b7c3"/><stop offset="0.6" stop-color="#a9aebc"/><stop offset="1" stop-color="#a0a6b5"/></radialGradient><filter id="bl" x="-50%" y="-50%" width="200%" height="200%"><feGaussianBlur stdDeviation="6"/></filter><filter id="bl2" x="-50%" y="-50%" width="200%" height="200%"><feGaussianBlur stdDeviation="1.2"/></filter></defs>
<rect x="966.5" y="101.5" width="600" height="80" fill="url(#sky)"/>
<polygon points="966.5,130 1515,136 1515,200 966.5,200" fill="url(#beige)" filter="url(#bl2)"/>
<ellipse cx="1030" cy="107" rx="28" ry="5" fill="#555" opacity="0.55" filter="url(#bl)"/>
<ellipse cx="1090" cy="105" rx="20" ry="4" fill="#666" opacity="0.35" filter="url(#bl)"/>
<ellipse cx="1270" cy="108" rx="40" ry="6" fill="#555" opacity="0.6" filter="url(#bl)"/>
<ellipse cx="1410" cy="106" rx="30" ry="5" fill="#777" opacity="0.45" filter="url(#bl)"/>
<ellipse cx="1495" cy="114" rx="25" ry="8" fill="#666" opacity="0.5" filter="url(#bl)"/>
<ellipse cx="1180" cy="110" rx="20" ry="4" fill="#888" opacity="0.3" filter="url(#bl)"/>
<polygon points="966.5,169 1466,143.5 1515,152.6 1515,495 966.5,495" fill="url(#plane)"/>
<g fill="none" stroke="#8b93ad" stroke-linecap="butt" stroke-linejoin="round" opacity="0.9">
<polyline points="1080,351 1100,349 1120,352 1150,356 1166,350 1330,326 1352,330" stroke-width="6"/>
<polyline points="1083,398 1150,392 1200,392 1352,367" stroke-width="7"/>
<polyline points="1230,345 1255,385" stroke-width="8" opacity="0.8"/>
<polyline points="1318,330 1340,372" stroke-width="8" opacity="0.8"/>
</g>
<ellipse cx="1172" cy="405" rx="26" ry="30" fill="#8b93ad" opacity="0.95"/>
<ellipse cx="1388" cy="362" rx="26" ry="20" fill="#8b93ad" opacity="0.9"/>
<ellipse cx="1130" cy="338" rx="16" ry="10" fill="#8b93ad" opacity="0.7"/>
<ellipse cx="1352" cy="318" rx="16" ry="10" fill="#8b93ad" opacity="0.6"/>
<ellipse cx="1113" cy="316" rx="30" ry="28.5" fill="#6e6e72"/>
<ellipse cx="1112" cy="324" rx="27" ry="19" fill="#2e2e34"/>
<path d="M1092,322 L1103,316 L1110,330 L1100,336 Z" fill="#7a7a80"/>
<path d="M1120,312 L1134,318 L1130,330 L1118,322 Z" fill="#77777c"/>
<ellipse cx="1336" cy="288" rx="26" ry="26" fill="#6e6e72"/>
<ellipse cx="1339" cy="288" rx="18" ry="16" fill="#a9aebb"/>
<path d="M1322,300 Q1339,318 1358,300 L1358,312 Q1339,318 1322,310 Z" fill="#26262c"/>
<path d="M1326,283 L1336,276 L1338,296 L1328,300 Z" fill="#6a6a6e"/>
<rect x="1340" y="273.5" width="21" height="12.5" fill="#626267"/>
<g stroke="#8d8e95" stroke-width="9" opacity="0.75" fill="none">
<polyline points="1192,316 1226,372"/><polyline points="1282,302 1327,351"/>
</g>
<polyline points="1035.5,325.5 1084,313.5" fill="none" stroke="#6a6a6f" stroke-width="8"/>
<path d="M1084,313.5 Q1113,278 1146,318 L1156,324 L1164,316 L1298,299 L1316,304" fill="none" stroke="#6a6a6f" stroke-width="7" stroke-linejoin="round"/>
<path d="M1312,302 L1394,284 L1395,290 L1318,312 Z" fill="#6a6a6f"/>
<polyline points="1352,304 1367,312" fill="none" stroke="#6a6a6f" stroke-width="7"/>
<path d="M1104,300 L1117,298 L1135,338 L1116,340 Z" fill="#8a8a90" opacity="0.95"/>
<path d="M1035.5,373 L1084,361 Q1095,346 1106,342 L1131,340 Q1150,343 1160,356 L1178,373 L1366,351" fill="none" stroke="#6a6a6f" stroke-width="8" stroke-linejoin="round"/>
<path d="M1348,340 Q1352,318 1379,311" fill="none" stroke="#6a6a6f" stroke-width="8"/>
<rect x="1379" y="301.5" width="20" height="10" fill="#636368"/>
<polyline points="1399,306.5 1424,305.5" fill="none" stroke="#6a6a6f" stroke-width="7"/>
<ellipse cx="1135" cy="390" rx="39" ry="35.5" fill="#6e6e72"/>
<ellipse cx="1131" cy="384" rx="33" ry="27" fill="#767679" opacity="0.6"/>
<ellipse cx="1137" cy="390" rx="26" ry="18.5" fill="#a9aebb"/>
<polygon points="1112,386 1128,378 1132,392 1118,400" fill="#626267"/>
<polygon points="1138,376 1156,380 1150,390 1138,388" fill="#626267"/>
<polygon points="1140,398 1158,394 1156,406 1142,408" fill="#626267"/>
<polygon points="1120,402 1134,396 1136,408 1124,408" fill="#626267"/>
<rect x="1132" y="403" width="6" height="6" fill="#222"/>
<ellipse cx="1407" cy="342.5" rx="32.5" ry="32" fill="#6e6e72"/>
<ellipse cx="1419" cy="346.5" rx="16" ry="19" fill="#a9aebb"/>
<polygon points="1405,332 1420,329 1418,340 1408,342" fill="#5e5e63"/>
<polygon points="1422,338 1434,342 1430,352 1420,348" fill="#5e5e63"/>
<polygon points="1414,352 1426,356 1418,364 1410,360" fill="#5e5e63"/>
<g stroke="#eef1f6" stroke-width="1.4" opacity="0.95">
<line x1="1251.8" y1="356.6" x2="1113.5" y2="319.3"/>
<line x1="1251.8" y1="356.6" x2="1133.3" y2="385.3"/>
<line x1="1251.8" y1="356.6" x2="1341.2" y2="292.9"/>
<line x1="1251.8" y1="356.6" x2="1397.3" y2="335.8"/>
</g>
<circle cx="1113.5" cy="319.3" r="2.3" fill="#dfe3ea" stroke="#fff" stroke-width="0.8"/>
<circle cx="1133.3" cy="385.3" r="2.3" fill="#dfe3ea" stroke="#fff" stroke-width="0.8"/>
<circle cx="1341.2" cy="292.9" r="2.3" fill="#dfe3ea" stroke="#fff" stroke-width="0.8"/>
<circle cx="1397.3" cy="335.8" r="2.3" fill="#dfe3ea" stroke="#fff" stroke-width="0.8"/>
<path d="M1246,359 H1258 M1252,353 V365" stroke="#111" stroke-width="1.2"/>
</svg>
<div class="a" style="left:3.50px;top:2.20px;width:10.00px;height:10.30px;background:rgba(70,70,70,0.78);border-radius:6px;"></div>
<div class="a" style="left:17.50px;top:2.20px;width:47.00px;height:10.30px;background:rgba(70,70,70,0.78);border-radius:6px;"></div>
<div class="t ue" style="left:21.50px;top:3.00px;font-size:6px;line-height:8px;color:#bdbdbd;font-family:'Liberation Sans',sans-serif;">Perspective</div>
<div class="a" style="left:70.50px;top:2.20px;width:21.00px;height:10.30px;background:rgba(70,70,70,0.78);border-radius:6px;"></div>
<div class="t ue" style="left:74.50px;top:3.00px;font-size:6px;line-height:8px;color:#bdbdbd;font-family:'Liberation Sans',sans-serif;">Lit</div>
<div class="a" style="left:95.50px;top:2.20px;width:22.00px;height:10.30px;background:rgba(70,70,70,0.78);border-radius:6px;"></div>
<div class="t ue" style="left:99.50px;top:3.00px;font-size:6px;line-height:8px;color:#bdbdbd;font-family:'Liberation Sans',sans-serif;">Show</div>
<div class="a" style="left:120.50px;top:2.20px;width:34.00px;height:10.30px;background:rgba(70,70,70,0.78);border-radius:6px;"></div>
<div class="t ue" style="left:124.50px;top:3.00px;font-size:6px;line-height:8px;color:#bdbdbd;font-family:'Liberation Sans',sans-serif;">Character</div>
<div class="a" style="left:158.50px;top:2.20px;width:33.00px;height:10.30px;background:rgba(70,70,70,0.78);border-radius:6px;"></div>
<div class="t ue" style="left:162.50px;top:3.00px;font-size:6px;line-height:8px;color:#bdbdbd;font-family:'Liberation Sans',sans-serif;">LOD Auto</div>
<div class="a" style="left:196.50px;top:2.20px;width:25.00px;height:10.30px;background:rgba(70,70,70,0.78);border-radius:6px;"></div>
<div class="t ue" style="left:200.50px;top:3.00px;font-size:6px;line-height:8px;color:#bdbdbd;font-family:'Liberation Sans',sans-serif;">    x1.0</div>
<div class="a" style="left:201.50px;top:4.00px;width:5.50px;height:7.00px;background:#cfcfcf;clip-path:polygon(0 0,100% 50%,0 100%);"></div>
<div class="a" style="left:367.50px;top:2.20px;width:54.00px;height:10.30px;background:rgba(90,90,90,0.55);border-radius:6px;"></div>
<div class="a" style="left:423.50px;top:2.20px;width:12.00px;height:10.30px;background:rgba(60,60,60,0.8);border-radius:6px;"></div>
<div class="a" style="left:443.50px;top:2.20px;width:22.00px;height:10.30px;background:rgba(60,60,60,0.8);border-radius:6px;"></div>
<div class="a" style="left:444.50px;top:3.00px;width:10.00px;height:8.50px;background:#2f7de0;border-radius:5px;"></div>
<div class="a" style="left:468.50px;top:2.20px;width:25.00px;height:10.30px;background:rgba(60,60,60,0.8);border-radius:6px;"></div>
<div class="a" style="left:469.50px;top:3.00px;width:10.00px;height:8.50px;background:#2f7de0;border-radius:5px;"></div>
<div class="a" style="left:496.50px;top:2.20px;width:37.00px;height:10.30px;background:rgba(60,60,60,0.8);border-radius:6px;"></div>
<div class="a" style="left:535.50px;top:2.20px;width:12.00px;height:10.30px;background:rgba(60,60,60,0.8);border-radius:6px;"></div>
<div class="t ue" style="left:455.50px;top:3.00px;font-size:6px;line-height:8px;color:#bdbdbd;font-family:'Liberation Sans',sans-serif;">10</div>
<div class="t ue" style="left:480.50px;top:3.00px;font-size:6px;line-height:8px;color:#bdbdbd;font-family:'Liberation Sans',sans-serif;">10°</div>
<div class="t ue" style="left:511.50px;top:3.00px;font-size:6px;line-height:8px;color:#bdbdbd;font-family:'Liberation Sans',sans-serif;">0.25</div>
<div class="t ue" style="left:541.50px;top:3.00px;font-size:6px;line-height:8px;color:#bdbdbd;font-family:'Liberation Sans',sans-serif;">4</div>
<div class="t ue" style="left:2.50px;top:17.00px;font-size:5.6px;line-height:7.6px;color:#5c5c5c;font-weight:bold;font-family:'Liberation Sans',sans-serif;">Previewing Reference Pose</div>
<div class="t ue" style="left:2.50px;top:24.60px;font-size:5.6px;line-height:7.6px;color:#5c5c5c;font-weight:bold;font-family:'Liberation Sans',sans-serif;">LOD: 0</div>
<div class="t ue" style="left:2.50px;top:32.20px;font-size:5.6px;line-height:7.6px;color:#5c5c5c;font-weight:bold;font-family:'Liberation Sans',sans-serif;">Current Screen Size: 1</div>
<div class="t ue" style="left:2.50px;top:39.80px;font-size:5.6px;line-height:7.6px;color:#5c5c5c;font-weight:bold;font-family:'Liberation Sans',sans-serif;">Triangles: 85,958</div>
<div class="t ue" style="left:2.50px;top:47.40px;font-size:5.6px;line-height:7.6px;color:#5c5c5c;font-weight:bold;font-family:'Liberation Sans',sans-serif;">Vertices: 56,099</div>
<div class="t ue" style="left:2.50px;top:55.00px;font-size:5.6px;line-height:7.6px;color:#5c5c5c;font-weight:bold;font-family:'Liberation Sans',sans-serif;">UV Channels: 2</div>
<div class="t ue" style="left:2.50px;top:62.60px;font-size:5.6px;line-height:7.6px;color:#5c5c5c;font-weight:bold;font-family:'Liberation Sans',sans-serif;">Approx Size: 401x218x155</div>
</div>
<div class="a" style="left:670.00px;top:41.00px;width:112.00px;height:395.00px;background:#232323;"></div>
<div class="a" style="left:670.00px;top:41.00px;width:3.00px;height:395.00px;background:#0c0c12;"></div>
<div class="a" style="left:673.00px;top:42.00px;width:72.00px;height:14.00px;background:#262626;"></div>
<div class="t ue" style="left:684.00px;top:45.62px;font-size:6.5px;line-height:6.5px;color:#c8c8c8;font-family:'Liberation Sans',sans-serif;">Details</div>
<div class="a" style="left:676.00px;top:45.00px;width:6.00px;height:7.00px;border-left:1.5px solid #ccc;transform:skewX(-40deg);"></div>
<div class="t ue" style="left:733.00px;top:44.71px;font-size:7.5px;line-height:7.5px;color:#c0c0c0;font-family:'Liberation Sans',sans-serif;">×</div>
<div class="a" style="left:745.00px;top:42.00px;width:37.00px;height:14.00px;background:#1a1a1a;"></div>
<div class="t ue" style="left:757.00px;top:45.62px;font-size:6.5px;line-height:6.5px;color:#c8c8c8;font-family:'Liberation Sans',sans-serif;">Preview</div>
<div class="a" style="left:747.00px;top:45.00px;width:6.00px;height:7.00px;border-left:1.5px solid #ccc;transform:skewX(-40deg);"></div>
<div class="a" style="left:673.00px;top:270.70px;width:109.00px;height:13.30px;background:#161616;"></div>
<div class="a" style="left:673.00px;top:271.00px;width:58.00px;height:13.00px;background:#282828;border-radius:2px 2px 0 0;"></div>
<div class="t ue" style="left:684.00px;top:274.89px;font-size:6.2px;line-height:6.2px;color:#d0d0d0;font-family:'Liberation Sans',sans-serif;">Animation..</div>
<div class="a" style="left:676.00px;top:274.50px;width:4.00px;height:6.50px;border:1px solid #999;border-radius:0 0 2px 2px;"></div>
<div class="t ue" style="left:721.50px;top:274.17px;font-size:7px;line-height:7px;color:#c8c8c8;font-family:'Liberation Sans',sans-serif;">×</div>
<div class="t ue" style="left:744.00px;top:274.89px;font-size:6.2px;line-height:6.2px;color:#d0d0d0;font-family:'Liberation Sans',sans-serif;">Asset Bro...</div>
<div class="a" style="left:735.00px;top:274.50px;width:6.00px;height:6.50px;border:1px solid #aaa;border-radius:1px;"></div>
<div class="a" style="left:673.00px;top:284.00px;width:109.00px;height:12.00px;background:#0f0f0f;"></div>
<div class="t ue" style="left:687.00px;top:288.02px;font-size:5.5px;line-height:5.5px;color:#505050;font-family:'Liberation Sans',sans-serif;">Search Animation Notifies...</div>
<div class="a" style="left:677.00px;top:286.50px;width:6.00px;height:6.00px;border:1px solid #bbb;border-radius:50%;"></div>
<div class="a" style="left:673.00px;top:296.00px;width:109.00px;height:140.00px;background:#1c1c1c;"></div>
</div>
</body></html>
